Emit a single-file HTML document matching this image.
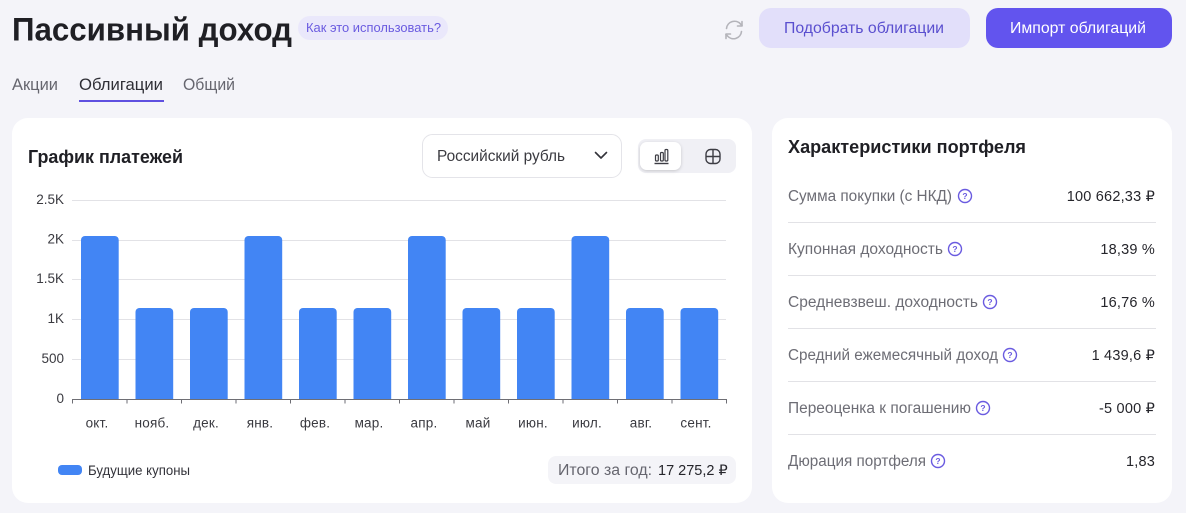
<!DOCTYPE html>
<html lang="ru">
<head>
<meta charset="utf-8">
<title>Пассивный доход</title>
<style>
html,body{margin:0;padding:0;background:#f4f4f9;width:1186px;height:513px;overflow:hidden}
svg{display:block}
text{font-family:"Liberation Sans","DejaVu Sans",sans-serif}
.l{font-size:15.5px;fill:#6d6d75}
.v{font-size:14.5px;fill:#25252b;text-anchor:end;letter-spacing:.2px}
.x{font-size:13.5px;fill:#3a3a40;text-anchor:middle;letter-spacing:.2px}
.y{font-size:13.5px;fill:#3a3a40;text-anchor:end}
.g{stroke:#e2e2e6;stroke-width:1}
.q circle{fill:none;stroke:#6a5be0;stroke-width:1.4}
.q text{font-size:8.5px;fill:#6a5be0;text-anchor:middle;font-weight:bold}
</style>
</head>
<body>
<svg width="1186" height="513" viewBox="0 0 1186 513" xmlns="http://www.w3.org/2000/svg">
<defs>
<filter id="s" x="-30%" y="-30%" width="160%" height="170%"><feDropShadow dx="0" dy="1" stdDeviation="1.5" flood-color="#000" flood-opacity=".18"/></filter>
</defs>
<rect width="1186" height="513" fill="#f4f4f9"/>

<!-- header -->
<text x="12" y="40.5" font-size="32" font-weight="bold" fill="#1f1f24" textLength="280" lengthAdjust="spacingAndGlyphs">Пассивный доход</text>
<rect x="298" y="16" width="150" height="24" rx="12" fill="#eae8fb"/>
<text x="306" y="32" font-size="12.5" fill="#6a5be0" textLength="135" lengthAdjust="spacingAndGlyphs">Как это использовать?</text>

<text x="12" y="90" font-size="16.5" fill="#66666f" textLength="46" lengthAdjust="spacingAndGlyphs">Акции</text>
<text x="79" y="90" font-size="16.5" fill="#2f2f36" textLength="84" lengthAdjust="spacingAndGlyphs">Облигации</text>
<text x="183" y="90" font-size="16.5" fill="#66666f" textLength="52" lengthAdjust="spacingAndGlyphs">Общий</text>
<rect x="79" y="100" width="85" height="2" fill="#5f50e0"/>

<!-- refresh -->
<g fill="none" stroke="#b4b4ba" stroke-width="1.6" stroke-linecap="round" stroke-linejoin="round">
<path d="M726.5 28.5a8 8 0 0 1 14-4.500l1.500 1.500"/>
<path d="M742 21.5v4.500h-4.500"/>
<path d="M741.5 31.5a8 8 0 0 1-14 4.500l-1.500-1.500"/>
<path d="M726 38.5v-4.500h4.500"/>
</g>

<rect x="759" y="8" width="211" height="40" rx="12" fill="#e2dffa"/>
<text x="784" y="33" font-size="16" fill="#5a4fcf" textLength="160" lengthAdjust="spacingAndGlyphs">Подобрать облигации</text>
<rect x="986" y="8" width="186" height="40" rx="12" fill="#6254ee"/>
<text x="1010" y="33" font-size="16" fill="#fff" textLength="136" lengthAdjust="spacingAndGlyphs">Импорт облигаций</text>

<!-- left card -->
<rect x="12" y="118" width="740" height="385" rx="16" fill="#fff"/>
<text x="28" y="163" font-size="18.500" font-weight="bold" fill="#1f1f24" textLength="155" lengthAdjust="spacingAndGlyphs">График платежей</text>

<rect x="422.5" y="134.5" width="199" height="43" rx="10" fill="#fff" stroke="#e4e4e9"/>
<text x="437" y="161" font-size="16" fill="#3a3a40" textLength="128" lengthAdjust="spacingAndGlyphs">Российский рубль</text>
<path d="M595.5 152.5l5.500 5.500 5.500-5.500" fill="none" stroke="#33333a" stroke-width="1.6" stroke-linecap="round" stroke-linejoin="round"/>

<rect x="638" y="139" width="98" height="34" rx="8" fill="#f0f0f5"/>
<rect x="640" y="142" width="41" height="28" rx="7" fill="#fff" filter="url(#s)"/>
<g fill="none" stroke="#3d3d44" stroke-width="1.2">
<rect x="655.5" y="155" width="2.800" height="6" rx="1"/>
<rect x="660.5" y="152.5" width="2.800" height="8.500" rx="1"/>
<rect x="665" y="149.5" width="2.800" height="11.500" rx="1"/>
<path d="M654.5 163.5h14" stroke-width="1.400"/>
</g>
<g fill="none" stroke="#3d3d44" stroke-width="1.4">
<rect x="706" y="149.5" width="14" height="14" rx="4.500"/>
<path d="M713 149.5v14M706 156.5h14"/>
</g>

<!-- chart -->
<path class="g" d="M72 200.500H726M72 240.500H726M72 279.500H726M72 319.500H726M72 359.500H726"/>
<text class="y" x="64" y="204">2.5K</text>
<text class="y" x="64" y="243.5">2K</text>
<text class="y" x="64" y="283">1.5K</text>
<text class="y" x="64" y="323">1K</text>
<text class="y" x="64" y="363">500</text>
<text class="y" x="64" y="403">0</text>
<g fill="#4285f4">
<path d="M81 399V240a4 4 0 0 1 4-4h29.700a4 4 0 0 1 4 4V399z"/>
<path d="M135.500 399V312a4 4 0 0 1 4-4h29.700a4 4 0 0 1 4 4V399z"/>
<path d="M190 399V312a4 4 0 0 1 4-4h29.700a4 4 0 0 1 4 4V399z"/>
<path d="M244.500 399V240a4 4 0 0 1 4-4h29.700a4 4 0 0 1 4 4V399z"/>
<path d="M299 399V312a4 4 0 0 1 4-4h29.700a4 4 0 0 1 4 4V399z"/>
<path d="M353.500 399V312a4 4 0 0 1 4-4h29.700a4 4 0 0 1 4 4V399z"/>
<path d="M408 399V240a4 4 0 0 1 4-4h29.700a4 4 0 0 1 4 4V399z"/>
<path d="M462.500 399V312a4 4 0 0 1 4-4h29.700a4 4 0 0 1 4 4V399z"/>
<path d="M517 399V312a4 4 0 0 1 4-4h29.700a4 4 0 0 1 4 4V399z"/>
<path d="M571.500 399V240a4 4 0 0 1 4-4h29.700a4 4 0 0 1 4 4V399z"/>
<path d="M626 399V312a4 4 0 0 1 4-4h29.700a4 4 0 0 1 4 4V399z"/>
<path d="M680.500 399V312a4 4 0 0 1 4-4h29.700a4 4 0 0 1 4 4V399z"/>
</g>
<path d="M72 399.500H727M72.500 399v4.500M127 399v4.500M181.500 399v4.500M236 399v4.500M290.500 399v4.500M345 399v4.500M399.500 399v4.500M454 399v4.500M508.500 399v4.500M563 399v4.500M617.500 399v4.500M672 399v4.500M726.500 399v4.500" fill="none" stroke="#6e6e74" stroke-width="1"/>
<text class="x" x="97" y="427.5">окт.</text>
<text class="x" x="152" y="427.5">нояб.</text>
<text class="x" x="206" y="427.5">дек.</text>
<text class="x" x="260" y="427.5">янв.</text>
<text class="x" x="315" y="427.5">фев.</text>
<text class="x" x="369" y="427.5">мар.</text>
<text class="x" x="424" y="427.5">апр.</text>
<text class="x" x="478" y="427.5">май</text>
<text class="x" x="533" y="427.5">июн.</text>
<text class="x" x="587" y="427.5">июл.</text>
<text class="x" x="641" y="427.5">авг.</text>
<text class="x" x="696" y="427.5">сент.</text>

<rect x="58" y="465" width="24" height="10" rx="4" fill="#4285f4"/>
<text x="88" y="475" font-size="13.500" fill="#33333a" textLength="102" lengthAdjust="spacingAndGlyphs">Будущие купоны</text>
<rect x="548" y="456" width="188" height="28" rx="8" fill="#f4f4f8"/>
<text x="558" y="475" font-size="15.500" fill="#66666f" textLength="94" lengthAdjust="spacingAndGlyphs">Итого за год:</text>
<text x="658" y="475" font-size="14.500" fill="#25252b">17 275,2 ₽</text>

<!-- right card -->
<rect x="772" y="118" width="400" height="385" rx="16" fill="#fff"/>
<text x="788" y="153" font-size="18.500" font-weight="bold" fill="#1f1f24" textLength="238" lengthAdjust="spacingAndGlyphs">Характеристики портфеля</text>

<path class="g" d="M788 222.500H1156M788 275.500H1156M788 328.500H1156M788 381.500H1156M788 434.500H1156"/>

<text class="l" x="788" y="201" textLength="164" lengthAdjust="spacingAndGlyphs">Сумма покупки (с НКД)</text>
<g class="q"><circle cx="965" cy="196" r="6.500"/><text x="965" y="199">?</text></g>
<text class="v" x="1155" y="201">100 662,33 ₽</text>

<text class="l" x="788" y="254" textLength="155" lengthAdjust="spacingAndGlyphs">Купонная доходность</text>
<g class="q"><circle cx="955" cy="249" r="6.500"/><text x="955" y="252">?</text></g>
<text class="v" x="1155" y="254">18,39 %</text>

<text class="l" x="788" y="307" textLength="190" lengthAdjust="spacingAndGlyphs">Средневзвеш. доходность</text>
<g class="q"><circle cx="990" cy="302" r="6.500"/><text x="990" y="305">?</text></g>
<text class="v" x="1155" y="307">16,76 %</text>

<text class="l" x="788" y="360" textLength="210" lengthAdjust="spacingAndGlyphs">Средний ежемесячный доход</text>
<g class="q"><circle cx="1010" cy="355" r="6.500"/><text x="1010" y="358">?</text></g>
<text class="v" x="1155" y="360">1 439,6 ₽</text>

<text class="l" x="788" y="413" textLength="183" lengthAdjust="spacingAndGlyphs">Переоценка к погашению</text>
<g class="q"><circle cx="983" cy="408" r="6.500"/><text x="983" y="411">?</text></g>
<text class="v" x="1155" y="413">-5 000 ₽</text>

<text class="l" x="788" y="466" textLength="138" lengthAdjust="spacingAndGlyphs">Дюрация портфеля</text>
<g class="q"><circle cx="938" cy="461" r="6.500"/><text x="938" y="464">?</text></g>
<text class="v" x="1155" y="466">1,83</text>
</svg>
</body>
</html>
